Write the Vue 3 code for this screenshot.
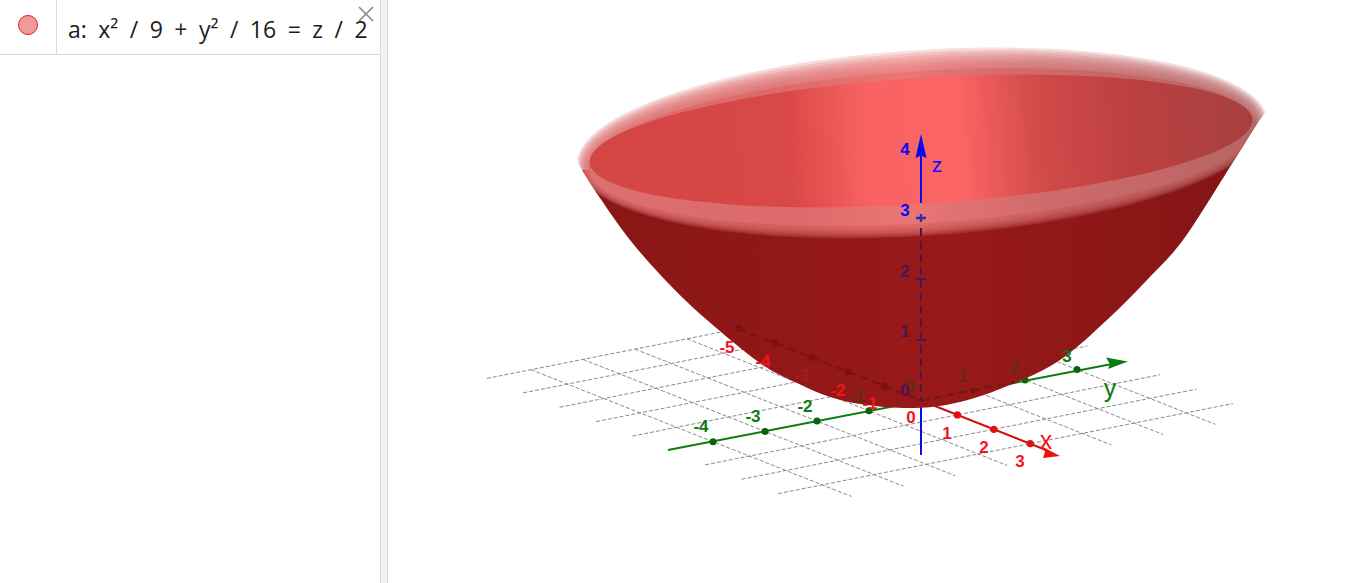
<script setup>
// floor projection, read off the tick marks of the axes
const origin = { x: 921, y: 400.5 }
const floor = (x, y) => ({
  x: origin.x + x * 36.4 + y * 52,
  y: origin.y + x * 14.4 - y * 10.3,
})

const gridLines = []
for (const x of [-5, -4, -3, -2, -1, 1, 2, 3]) {
  gridLines.push({ a: floor(x, -4.85), b: floor(x, 3.9) })
}
for (const y of [-4, -3, -2, -1, 1, 2, 3]) {
  gridLines.push({ a: floor(-5, y), b: floor(3.8, y) })
}

const outline = [
  [600, 198], [630, 240], [668, 283], [707, 320], [760, 363], [797, 383], [830, 397], [867, 405],
  [915, 408], [960, 402], [1010, 385], [1060, 360], [1107, 320], [1147, 280], [1183, 240], [1225, 175], [1253, 130],
]
const smooth = (pts) => {
  let d = `M${pts[0][0]} ${pts[0][1]}`
  for (let i = 0; i < pts.length - 1; i++) {
    const p0 = pts[i - 1] || pts[i]
    const p1 = pts[i]
    const p2 = pts[i + 1]
    const p3 = pts[i + 2] || p2
    const c1 = [p1[0] + (p2[0] - p0[0]) / 6, p1[1] + (p2[1] - p0[1]) / 6]
    const c2 = [p2[0] - (p3[0] - p1[0]) / 6, p2[1] - (p3[1] - p1[1]) / 6]
    d += ` C${c1[0].toFixed(1)} ${c1[1].toFixed(1)} ${c2[0].toFixed(1)} ${c2[1].toFixed(1)} ${p2[0]} ${p2[1]}`
  }
  return d
}
const bodyPath = smooth([[582, 170], ...outline]) + ' Z'
const clipPath = smooth([[576, 155], [582, 170], ...outline, [1267, 110]]) + ' A346 100 -3.7 0 0 576 155 Z'

// soft edge of the cut surface, outermost ring first
const rings = Array.from({ length: 9 }, (_, i) => {
  const t = i / 8
  return {
    cy: 143 + 4 * t,
    rx: 346 - 11 * t,
    ry: 93 - 17 * t,
    opacity: i === 8 ? 1 : 0.24,
  }
})

const xTicks = [-5, -4, -3, -2, -1].map((x) => floor(x, 0))
const xTicksFront = [1, 2, 3].map((x) => floor(x, 0))
const yTicks = [-4, -3, -2, -1, 2, 3].map((y) => floor(0, y))
const yTickHidden = floor(0, 1)

const redLabels = [
  { t: '-5', x: 727, y: 349 }, { t: '-4', x: 763, y: 363 }, { t: '1', x: 947, y: 435 },
  { t: '2', x: 984, y: 449 }, { t: '3', x: 1020, y: 463 }, { t: '0', x: 911, y: 419 },
  { t: '-2', x: 838, y: 392 }, { t: '-1', x: 870, y: 405 },
]
const greenLabels = [
  { t: '-4', x: 701, y: 428 }, { t: '-3', x: 753, y: 418 }, { t: '-2', x: 805, y: 408 }, { t: '3', x: 1067, y: 358 },
]
const oliveLabels = [
  { t: '-1', x: 857, y: 398 }, { t: '0', x: 910, y: 388 }, { t: '1', x: 963, y: 378 }, { t: '2', x: 1015, y: 368 },
]
const purpleLabels = [
  { t: '2', x: 905, y: 273 }, { t: '1', x: 905, y: 333 }, { t: '0', x: 905, y: 392 },
]
const blueLabels = [
  { t: '4', x: 905, y: 151 }, { t: '3', x: 905, y: 212 },
]
</script>

<template>
  <div class="app">
    <aside class="algebra">
      <div class="row">
        <div class="marble-cell">
          <span class="marble"></span>
        </div>
        <div class="formula">a: x² / 9 + y² / 16 = z / 2</div>
        <svg class="close" width="18" height="18" viewBox="0 0 18 18">
          <path d="M2 2 L16 16 M16 2 L2 16" stroke="#8a8a8a" stroke-width="1.6" fill="none" />
        </svg>
      </div>
    </aside>
    <div class="splitter"></div>
    <svg class="graphics" viewBox="388 0 978 583" preserveAspectRatio="xMinYMin slice">
      <defs>
        <linearGradient id="inner" gradientUnits="userSpaceOnUse" x1="590" y1="0" x2="1250" y2="0">
          <stop offset="0" stop-color="#d44545" />
          <stop offset="0.3" stop-color="#d94848" />
          <stop offset="0.42" stop-color="#f86262" />
          <stop offset="0.56" stop-color="#fb6565" />
          <stop offset="0.68" stop-color="#d24a4a" />
          <stop offset="0.82" stop-color="#bd4040" />
          <stop offset="1" stop-color="#a64040" />
        </linearGradient>
        <linearGradient id="band" gradientUnits="userSpaceOnUse" x1="576" y1="0" x2="1267" y2="0">
          <stop offset="0" stop-color="#dc7070" />
          <stop offset="0.3" stop-color="#dd6a6a" />
          <stop offset="0.48" stop-color="#ea7575" />
          <stop offset="0.68" stop-color="#cf6a6a" />
          <stop offset="1" stop-color="#b56464" />
        </linearGradient>
        <linearGradient id="shell" gradientUnits="userSpaceOnUse" x1="600" y1="0" x2="1240" y2="0">
          <stop offset="0" stop-color="#8a1616" />
          <stop offset="0.55" stop-color="#991919" />
          <stop offset="1" stop-color="#841515" />
        </linearGradient>
        <clipPath id="bowl-clip">
          <path :d="clipPath" />
        </clipPath>
      </defs>

      <line
        v-for="(l, i) in gridLines"
        :key="i"
        :x1="l.a.x"
        :y1="l.a.y"
        :x2="l.b.x"
        :y2="l.b.y"
        class="grid-line"
      />

      <!-- axes in front of or beside the surface -->
      <line x1="668" y1="450" x2="1112" y2="364" class="axis-y" />
      <path d="M1128 361.5 L1106 357.5 L1110 364 L1108 369 Z" fill="#0f7a0f" />
      <circle v-for="(p, i) in yTicks" :key="i" :cx="p.x" :cy="p.y" r="3.5" fill="#0a640a" />

      <line x1="921" y1="400.5" x2="1046" y2="450" class="axis-x" />
      <path d="M1060 456 L1043 447 L1045 452 L1043 458 Z" fill="#ee0f0f" />
      <circle v-for="(p, i) in xTicksFront" :key="i" :cx="p.x" :cy="p.y" r="3.6" fill="#e01010" />

      <line x1="921" y1="400" x2="921" y2="455" class="axis-z" />

      <!-- surface -->
      <path :d="bodyPath" fill="url(#shell)" />
      <g clip-path="url(#bowl-clip)">
        <ellipse
          v-for="(r, i) in rings"
          :key="i"
          cx="921.5"
          :cy="r.cy"
          :rx="r.rx"
          :ry="r.ry"
          transform="rotate(-3.7 921.5 132.5)"
          fill="url(#band)"
          :fill-opacity="r.opacity"
        />
      </g>
      <ellipse cx="921" cy="141" rx="332" ry="63" transform="rotate(-3.7 921 141)" fill="url(#inner)" />

      <!-- what shows through the surface -->
      <line x1="739" y1="329" x2="921" y2="400.5" class="hidden-x" />
      <circle v-for="(p, i) in xTicks" :key="i" :cx="p.x" :cy="p.y" r="3.8" fill="#7f1010" />
      <line x1="921" y1="400.5" x2="1015" y2="382" class="hidden-y" />
      <circle :cx="yTickHidden.x" :cy="yTickHidden.y" r="3" fill="#6f1a10" />
      <line x1="921" y1="228" x2="921" y2="400" class="hidden-z" />
      <path d="M916 279 H926 M916 340 H926" stroke="#4a1550" stroke-width="2" />
      <path d="M916 218 H926 M921 214 V222" stroke="#2d2da8" stroke-width="2.4" />
      <path d="M916 400 H926" stroke="#6f1a10" stroke-width="1.4" />

      <!-- z axis above the rim -->
      <line x1="921" y1="156" x2="921" y2="203" class="axis-z" />
      <path d="M921 134 L926.5 158 L921 155.5 L915.5 158 Z" fill="#0505f0" />

      <g class="tick-label">
        <text v-for="(l, i) in redLabels" :key="i" :x="l.x" :y="l.y" fill="#f5141e">{{ l.t }}</text>
        <text v-for="(l, i) in greenLabels" :key="i" :x="l.x" :y="l.y" fill="#0f7a0f">{{ l.t }}</text>
        <text v-for="(l, i) in oliveLabels" :key="i" :x="l.x" :y="l.y" fill="#5c2f10">{{ l.t }}</text>
        <text v-for="(l, i) in purpleLabels" :key="i" :x="l.x" :y="l.y" fill="#4a1550">{{ l.t }}</text>
        <text v-for="(l, i) in blueLabels" :key="i" :x="l.x" :y="l.y" fill="#0a0af5">{{ l.t }}</text>
        <text x="802" y="377" fill="#a81c1c">-3</text>
      </g>
      <text x="937" y="172" class="axis-name axis-z-name" fill="#0a0af5">z</text>
      <text x="1110" y="397" class="axis-name" fill="#0f7a0f">y</text>
      <text x="1046" y="449" class="axis-name" fill="#f5141e">x</text>
    </svg>
  </div>
</template>

<style>
html, body {
  margin: 0;
  background: #fff;
}
</style>

<style scoped>
.app {
  display: flex;
  width: 1366px;
  height: 583px;
  overflow: hidden;
  background: #fff;
}

.algebra {
  width: 380px;
  flex: none;
  box-sizing: border-box;
}

.row {
  position: relative;
  display: flex;
  height: 55px;
  box-sizing: border-box;
  border-bottom: 1px solid #dcdcdc;
}

.marble-cell {
  width: 57px;
  flex: none;
  box-sizing: border-box;
  border-right: 1px solid #dcdcdc;
  display: flex;
  justify-content: center;
  padding-top: 15px;
  padding-right: 1px;
}

.marble {
  width: 18px;
  height: 18px;
  border-radius: 50%;
  border: 1px solid #d8202a;
  background: #f29a9a;
}

.formula {
  padding: 15px 0 0 11px;
  font-family: "Open Sans", sans-serif;
  font-size: 23px;
  line-height: 28px;
  color: #1c1c1c;
  white-space: nowrap;
  word-spacing: 5.5px;
}

.close {
  position: absolute;
  right: 5px;
  top: 5px;
}

.splitter {
  width: 8px;
  flex: none;
  box-sizing: border-box;
  background: #f3f3f3;
  border-left: 1px solid #dcdcdc;
  border-right: 1px solid #dcdcdc;
}

.graphics {
  flex: 1;
  height: 583px;
  display: block;
}

.grid-line {
  stroke: #8a8a8a;
  stroke-width: 1;
  stroke-dasharray: 4 2;
}

.axis-y {
  stroke: #0f7a0f;
  stroke-width: 2;
}

.axis-x {
  stroke: #d01010;
  stroke-width: 2;
}

.axis-z {
  stroke: #0a0ae8;
  stroke-width: 2;
}

.hidden-x {
  stroke: #7f1010;
  stroke-width: 2;
  stroke-dasharray: 8 5;
}

.hidden-y {
  stroke: #6f1a10;
  stroke-width: 2;
  stroke-dasharray: 8 5;
}

.hidden-z {
  stroke: #4a1550;
  stroke-width: 2;
  stroke-dasharray: 8 5;
}

.tick-label text {
  font-family: "Liberation Sans", sans-serif;
  font-size: 17px;
  font-weight: 700;
  text-anchor: middle;
  dominant-baseline: middle;
}

.axis-name {
  font-family: "Liberation Sans", sans-serif;
  font-size: 25px;
  text-anchor: middle;
}

.axis-z-name {
  font-size: 21px;
}
</style>
